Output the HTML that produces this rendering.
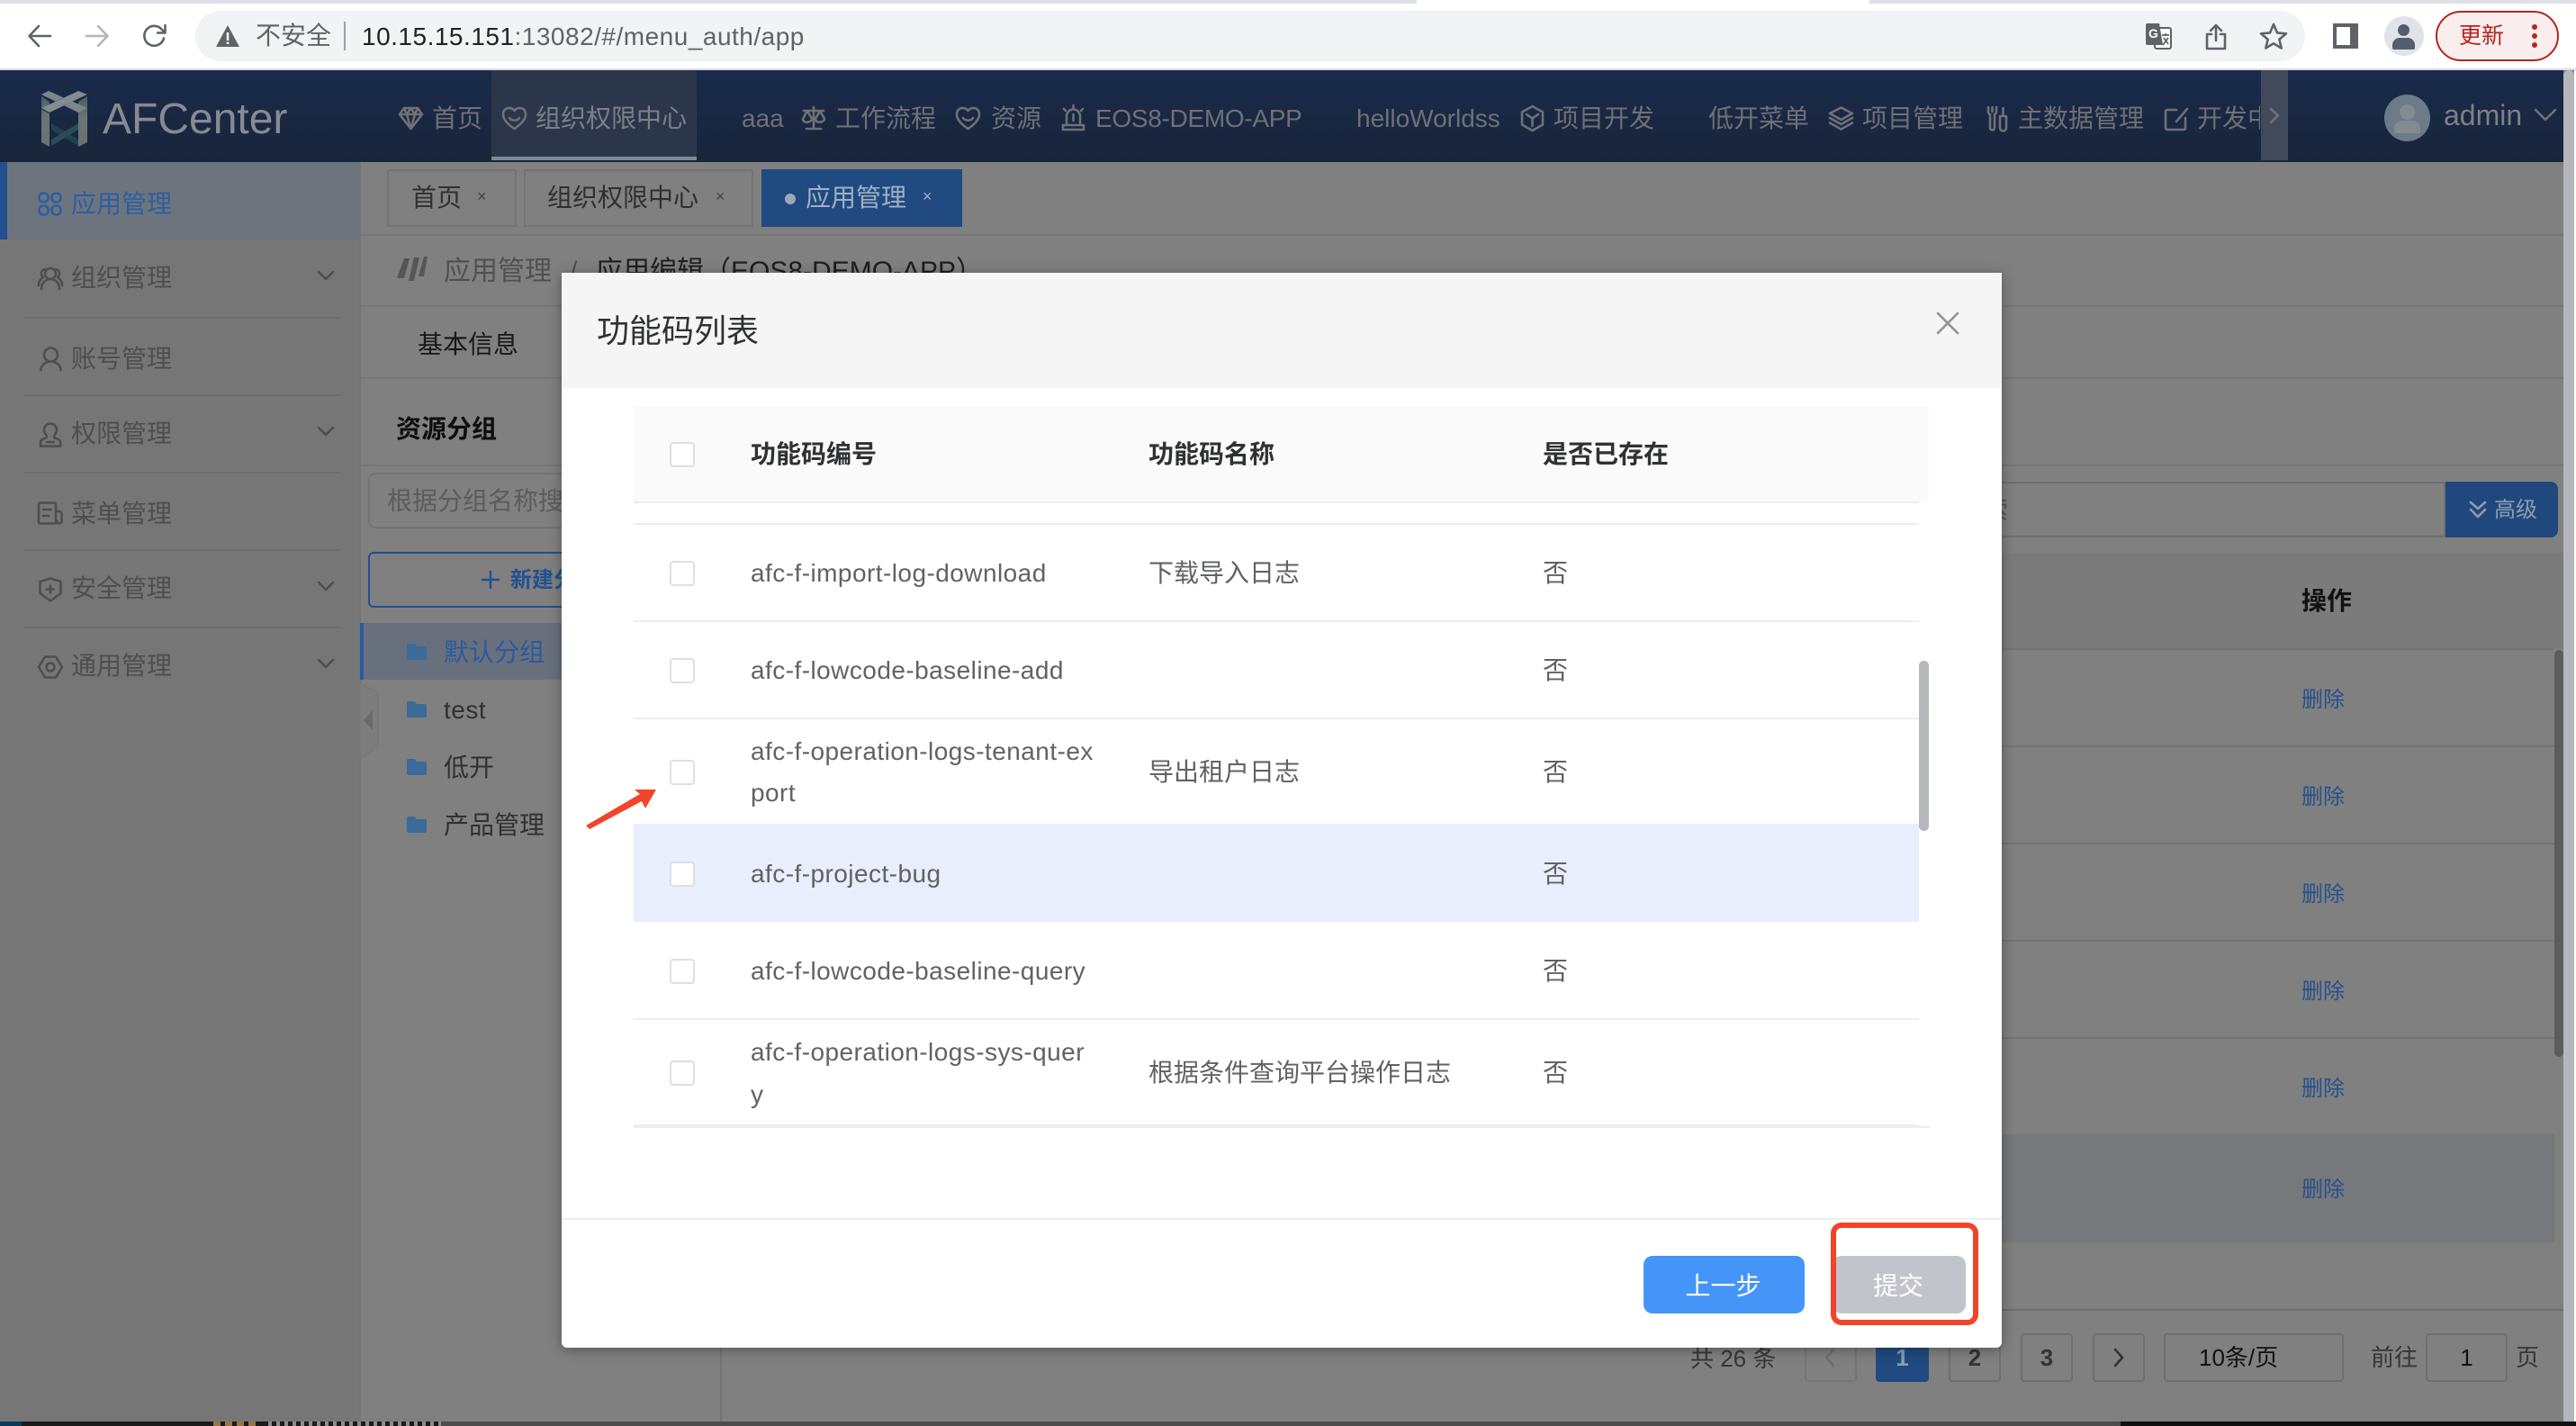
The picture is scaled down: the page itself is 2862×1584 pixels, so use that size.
<!DOCTYPE html>
<html lang="zh-CN">
<head>
<meta charset="utf-8">
<title>AFCenter</title>
<style>
*{box-sizing:border-box}
html,body{margin:0;padding:0}
body{width:2862px;height:1584px;overflow:hidden;position:relative;background:#808080;font-family:"Liberation Sans","Noto Sans CJK SC",sans-serif;font-size:28px}
.b{position:absolute}
.t{position:absolute;white-space:nowrap;height:50px;line-height:50px;margin-top:-24px;margin-left:-1px}
.lat{margin-left:0}
svg{position:absolute;overflow:visible}
.s{fill:none;stroke:currentColor;stroke-width:2.6;stroke-linecap:round;stroke-linejoin:round}
.nav{color:#6e7176}
.side{color:#4e4e4e}
.del{color:#28508c;font-size:24px;left:2558px}
.cell{color:#606266;letter-spacing:.45px;margin-left:0}
.zh{color:#606266}
.hd{color:#303133;font-weight:700}
.cb{position:absolute;left:744px;width:28px;height:28px;margin-top:-14px;background:#fff;border:2px solid #dcdfe6;border-radius:4px}
.ln{position:absolute;left:704px;width:1428px;height:2px;background:#ebeef5}
.pg{position:absolute;top:1481px;height:54px;border:2px solid #6f6f6f;border-radius:4px}
</style>
</head>
<body>

<!-- browser chrome -->
<div class="b" style="left:0;top:0;width:2862px;height:78px;background:#fff"></div>
<div class="b" style="left:0;top:0;width:1574px;height:4px;background:#dee1e6"></div>
<div class="b" style="left:2077px;top:0;width:785px;height:4px;background:#dee1e6"></div>
<div class="b" style="left:0;top:76px;width:2862px;height:2px;background:#dadce0"></div>
<svg style="left:30px;top:26px;color:#5f6368" width="28" height="28" viewBox="0 0 28 28"><path class="s" d="M26 14H3M13 3 2.500 14 13 25"/></svg>
<svg style="left:94px;top:26px;color:#b4b6ba" width="28" height="28" viewBox="0 0 28 28"><path class="s" d="M2 14h23M15 3l10.500 11L15 25"/></svg>
<svg style="left:158px;top:26px;color:#5f6368" width="28" height="28" viewBox="0 0 28 28"><path class="s" d="M24 16.500A11 11 0 1 1 22 7l3 3M25.500 2v8.500H17"/></svg>
<div class="b" style="left:217px;top:12px;width:2344px;height:56px;background:#f1f3f4;border-radius:28px"></div>
<svg style="left:239px;top:28px" width="28" height="24" viewBox="0 0 28 24"><path fill="#5f6368" d="M14 0 27 24H1z"/><path fill="#f1f3f4" d="M12.700 8h2.600v9h-2.600zM12.700 18.500h2.600V21h-2.600z"/></svg>
<div class="t" style="left:285px;top:39px;color:#5f6368;font-size:28px">不安全</div>
<div class="b" style="left:382px;top:24px;width:2px;height:32px;background:#9aa0a6"></div>
<div class="t lat" style="left:402px;top:40px;color:#5f6368;font-size:28px;letter-spacing:.5px"><span style="color:#202124">10.15.15.151</span>:13082/#/menu_auth/app</div>
<svg style="left:2384px;top:26px" width="30" height="30" viewBox="0 0 30 30"><rect x="10" y="5" width="18" height="23" rx="2" fill="#fff" stroke="#5f6368" stroke-width="2"/><path fill="#5f6368" d="M2 0h13l4 24H2a2 2 0 0 1-2-2V2a2 2 0 0 1 2-2z"/><text x="3" y="16" font-size="14" font-weight="700" fill="#fff" font-family="Liberation Sans">G</text><path d="M18 13h8M22 11v2M19 24l6-8M20 16l5 7" stroke="#5f6368" stroke-width="1.800" fill="none"/></svg>
<svg style="left:2450px;top:26px;color:#5f6368" width="24" height="30" viewBox="0 0 24 30"><path class="s" d="M12 19V2M6 8l6-6 6 6M7 12H2v16h20V12h-5"/></svg>
<svg style="left:2511px;top:25px;color:#5f6368" width="30" height="30" viewBox="0 0 30 30"><path class="s" d="M15 2l4 9.500 10 .8-7.600 6.500 2.300 9.700L15 23.300l-8.700 5.200 2.300-9.700L1 12.300l10-.8z"/></svg>
<div class="b" style="left:2592px;top:26px;width:28px;height:28px;background:#5f6368"></div>
<div class="b" style="left:2596px;top:30px;width:15px;height:20px;background:#fff"></div>
<div class="b" style="left:2649px;top:18px;width:44px;height:44px;border-radius:50%;background:#e0e3e7;overflow:hidden">
  <div class="b" style="left:15px;top:9px;width:13px;height:13px;border-radius:50%;background:#535f71"></div>
  <div class="b" style="left:9px;top:24px;width:25px;height:13px;border-radius:8px 8px 2px 2px;background:#535f71"></div>
</div>
<div class="b" style="left:2706px;top:12px;width:137px;height:56px;border-radius:28px;border:2px solid #b3261e;background:#f9eeed"></div>
<div class="t" style="left:2733px;top:39px;color:#b3261e;font-size:25px">更新</div>
<div class="b" style="left:2813px;top:27px;width:6px;height:6px;border-radius:50%;background:#b3261e"></div>
<div class="b" style="left:2813px;top:37px;width:6px;height:6px;border-radius:50%;background:#b3261e"></div>
<div class="b" style="left:2813px;top:47px;width:6px;height:6px;border-radius:50%;background:#b3261e"></div>

<!-- app header -->
<div class="b" style="left:0;top:78px;width:2848px;height:102px;background:linear-gradient(#192a4b,#19253a)"></div>
<svg style="left:46px;top:101px" width="51" height="62" viewBox="0 0 51 62">
  <defs>
    <linearGradient id="lc" x1="0" y1="0" x2="0" y2="1"><stop offset="0" stop-color="#46625f"/><stop offset=".45" stop-color="#6c7476"/><stop offset="1" stop-color="#697173"/></linearGradient>
  </defs>
  <path fill="#1f4250" d="M11 36l30 18v7L11 43z"/>
  <path fill="#2a4d5a" d="M41 36 11 54v7l30-18z"/>
  <path fill="url(#lc)" d="M0 6l9 6v50l-9-5z"/>
  <path fill="url(#lc)" d="M51 6l-10 6v50l10-5z"/>
  <path fill="#7d8689" d="M8 0 0 4 41 24 51 19z"/>
  <path fill="#19294a" d="M41.300 -1 51 3 9 25 -1 20z"/>
  <path fill="#838c8e" d="M41.300 0 50.700 4 9 24 0 19z"/>
</svg>
<div class="t lat" style="left:114px;top:132px;font-size:48px;color:#858b91">AFCenter</div>
<div class="b" style="left:546px;top:78px;width:228px;height:100px;background:#2b364a"></div>
<div class="b" style="left:546px;top:174px;width:228px;height:4px;background:#7f8992"></div>

<!-- nav icons -->
<svg class="nav" style="left:443px;top:118px" width="27" height="27" viewBox="0 0 27 27"><path class="s" d="M6 2h15l5 7-12.500 16L1 9zM1 9h25M9 9l4.500 16L18 9M6 2l3 7 4.500-7 4.500 7 3-7"/></svg>
<svg class="nav" style="left:558px;top:118px" width="27" height="27" viewBox="0 0 27 27"><path class="s" d="M13.500 5C10 0 1 1 1 9c0 7 8 13 12.500 16C18 22 26 16 26 9c0-8-9-9-12.500-4zM8 13c2 3.500 9 3.500 11 0"/></svg>
<svg class="nav" style="left:890px;top:118px" width="28" height="27" viewBox="0 0 28 27"><path class="s" d="M14 1v22M6 25h16M3 5h22M7 5 2 14c0 5 9 5 10 0L7 5zM21 5l-5 9c0 5 9 5 10 0L21 5z"/></svg>
<svg class="nav" style="left:1062px;top:118px" width="27" height="27" viewBox="0 0 27 27"><path class="s" d="M13.500 5C10 0 1 1 1 9c0 7 8 13 12.500 16C18 22 26 16 26 9c0-8-9-9-12.500-4zM8 13c2 3.500 9 3.500 11 0"/></svg>
<svg class="nav" style="left:1180px;top:116px" width="25" height="30" viewBox="0 0 25 30"><path class="s" d="M5 22V13a7.500 7.500 0 0 1 15 0v9M1 23h23v5H1zM12.500 1v2M2 5l2 2M23 5l-2 2M12.500 11v7"/></svg>
<svg class="nav" style="left:1689px;top:117px" width="27" height="29" viewBox="0 0 27 29"><path class="s" d="M13.500 1 25 7.500v14L13.500 28 2 21.500v-14zM7 10l6.500 4.500L20 10M13.500 14.500V23"/></svg>
<svg class="nav" style="left:2031px;top:118px" width="29" height="27" viewBox="0 0 29 27"><path class="s" stroke-width="3.400" d="M14.500 1.500 27 8l-12.500 7L2 8zM2 13l12.500 7L27 13M2 18.500l12.500 7 12.500-7"/></svg>
<svg class="nav" style="left:2206px;top:118px" width="25" height="27" viewBox="0 0 25 27"><path class="s" d="M3 1v5a3 3 0 0 0 2 3v15a2.500 2.500 0 0 0 5 0V9a3 3 0 0 0 2-3V1M7.500 1v5M16 11h7v13a3.500 3.500 0 0 1-7 0zM19.500 11V2"/></svg>
<svg class="nav" style="left:2405px;top:118px" width="27" height="27" viewBox="0 0 27 27"><path class="s" d="M13 4H3a2 2 0 0 0-2 2v18a2 2 0 0 0 2 2h18a2 2 0 0 0 2-2V13M25 3 13 17"/></svg>

<!-- nav text -->
<div class="t nav" style="left:481px;top:131px">首页</div>
<div class="t nav" style="left:596px;top:131px;color:#7c8086">组织权限中心</div>
<div class="t nav lat" style="left:824px;top:131px">aaa</div>
<div class="t nav" style="left:929px;top:131px">工作流程</div>
<div class="t nav" style="left:1102px;top:131px">资源</div>
<div class="t nav lat" style="left:1217px;top:131px;letter-spacing:-.3px">EOS8-DEMO-APP</div>
<div class="t nav lat" style="left:1507px;top:131px">helloWorldss</div>
<div class="t nav" style="left:1727px;top:131px">项目开发</div>
<div class="t nav" style="left:1899px;top:131px">低开菜单</div>
<div class="t nav" style="left:2070px;top:131px">项目管理</div>
<div class="t nav" style="left:2243px;top:131px">主数据管理</div>
<div class="t nav" style="left:2442px;top:131px;width:70px;overflow:hidden">开发中心</div>
<div class="b" style="left:2512px;top:78px;width:30px;height:100px;background:#414a5a"></div>
<svg class="nav" style="left:2522px;top:120px" width="10" height="17" viewBox="0 0 10 17"><path class="s" stroke-width="1.600" d="M1 1l8 7.500L1 16"/></svg>
<div class="b" style="left:2649px;top:105px;width:51px;height:52px;border-radius:50%;background:#6d7a88;overflow:hidden">
  <div class="b" style="left:17px;top:11px;width:17px;height:17px;border-radius:50%;background:#838a90"></div>
  <div class="b" style="left:11px;top:29px;width:29px;height:14px;border-radius:9px 9px 0 0;background:#838a90"></div>
</div>
<div class="t lat" style="left:2715px;top:127px;font-size:32px;color:#7d8185">admin</div>
<svg class="nav" style="left:2816px;top:121px" width="24" height="13" viewBox="0 0 24 13"><path class="s" stroke-width="2" d="M1 1l11 11L23 1"/></svg>

<!-- sidebar -->
<div class="b" style="left:0;top:180px;width:400px;height:1399px;background:#767676"></div>
<div class="b" style="left:0;top:180px;width:400px;height:86px;background:#6e747e"></div>
<div class="b" style="left:0;top:180px;width:8px;height:86px;background:#23508e"></div>
<div class="b" style="left:399px;top:180px;width:2px;height:1399px;background:#747474"></div>
<svg style="left:42px;top:213px;color:#2c5ea0" width="27" height="27" viewBox="0 0 27 27"><g class="s"><rect x="1.500" y="1.500" width="10" height="10" rx="4.500"/><rect x="15.500" y="1.500" width="10" height="10" rx="4.500"/><rect x="1.500" y="15.500" width="10" height="10" rx="4.500"/><rect x="15.500" y="15.500" width="10" height="10" rx="4.500"/></g></svg>
<div class="t" style="left:80px;top:226px;color:#2c5ea0">应用管理</div>
<svg class="side" style="left:42px;top:296px" width="28" height="26" viewBox="0 0 28 26"><path class="s" d="M14 2a6 6 0 0 1 0 12 6 6 0 0 1 0-12zM4 25c0-7 5-11 10-11s10 4 10 11M8 3a5 5 0 0 0-2 9c-3 2-5 5-5 9M20 3a5 5 0 0 1 2 9c3 2 5 5 5 9"/></svg>
<div class="t side" style="left:80px;top:308px">组织管理</div>
<svg class="side" style="left:353px;top:301px" width="18" height="11" viewBox="0 0 18 11"><path class="s" stroke-width="1.600" d="M1 1l8 8 8-8"/></svg>
<div class="b" style="left:26px;top:352px;width:352px;height:2px;background:#6d6d6d"></div>
<svg class="side" style="left:44px;top:385px" width="25" height="27" viewBox="0 0 25 27"><path class="s" d="M12.500 1.500a7.500 7.500 0 0 1 0 15 7.500 7.500 0 0 1 0-15zM1.500 26c0-5 5-9.500 11-9.500s11 4.500 11 9.500"/></svg>
<div class="t side" style="left:80px;top:398px">账号管理</div>
<div class="b" style="left:26px;top:438px;width:352px;height:2px;background:#6d6d6d"></div>
<svg class="side" style="left:43px;top:469px" width="26" height="28" viewBox="0 0 26 28"><path class="s" d="M13 1.500a7 7 0 0 1 7 7c0 4-3 5-3 8 0 2 7 1 7 6v4H2v-4c0-5 7-4 7-6 0-3-3-4-3-8a7 7 0 0 1 7-7zM9 22h8"/></svg>
<div class="t side" style="left:80px;top:481px">权限管理</div>
<svg class="side" style="left:353px;top:474px" width="18" height="11" viewBox="0 0 18 11"><path class="s" stroke-width="1.600" d="M1 1l8 8 8-8"/></svg>
<div class="b" style="left:26px;top:524px;width:352px;height:2px;background:#6d6d6d"></div>
<svg class="side" style="left:42px;top:557px" width="28" height="26" viewBox="0 0 28 26"><path class="s" d="M3 1.500h15a2 2 0 0 1 2 2v21H3a2 2 0 0 1-2-2v-19a2 2 0 0 1 2-2zM6 9h9M6 16h6M20 11h4a2.500 2.500 0 0 1 2.500 2.500V22a2.500 2.500 0 0 1-5 0"/></svg>
<div class="t side" style="left:80px;top:570px">菜单管理</div>
<div class="b" style="left:26px;top:610px;width:352px;height:2px;background:#6d6d6d"></div>
<svg class="side" style="left:43px;top:641px" width="26" height="28" viewBox="0 0 26 28"><path class="s" d="M13 1.500 24.500 5v13L13 26.500 1.500 18V5zM13 9.500v8M9 13.500h8"/></svg>
<div class="t side" style="left:80px;top:653px">安全管理</div>
<svg class="side" style="left:353px;top:646px" width="18" height="11" viewBox="0 0 18 11"><path class="s" stroke-width="1.600" d="M1 1l8 8 8-8"/></svg>
<div class="b" style="left:26px;top:696px;width:352px;height:2px;background:#6d6d6d"></div>
<svg class="side" style="left:42px;top:728px" width="28" height="26" viewBox="0 0 28 26"><path class="s" d="M8 1.500h12L27 13l-7 11.500H8L1 13z"/><circle class="s" cx="14" cy="13" r="4.500"/></svg>
<div class="t side" style="left:80px;top:739px">通用管理</div>
<svg class="side" style="left:353px;top:732px" width="18" height="11" viewBox="0 0 18 11"><path class="s" stroke-width="1.600" d="M1 1l8 8 8-8"/></svg>

<!-- tabs -->
<div class="b" style="left:401px;top:260px;width:2447px;height:2px;background:#777"></div>
<div class="b" style="left:430px;top:188px;width:144px;height:64px;border:2px solid #757575"></div>
<div class="t" style="left:458px;top:219px;color:#2f2f2f">首页</div>
<div class="t" style="left:531px;top:217px;color:#444;font-size:18px">×</div>
<div class="b" style="left:582px;top:188px;width:255px;height:64px;border:2px solid #757575"></div>
<div class="t" style="left:609px;top:219px;color:#2f2f2f">组织权限中心</div>
<div class="t" style="left:796px;top:217px;color:#444;font-size:18px">×</div>
<div class="b" style="left:846px;top:188px;width:223px;height:64px;background:#214a80"></div>
<div class="b" style="left:872px;top:215px;width:12px;height:12px;border-radius:50%;background:#9aa8ba"></div>
<div class="t" style="left:896px;top:219px;color:#9fb0c4">应用管理</div>
<div class="t" style="left:1026px;top:217px;color:#9fb0c4;font-size:18px">×</div>

<!-- breadcrumb -->
<svg style="left:440px;top:285px" width="35" height="27" viewBox="0 0 35 27"><path fill="#565656" d="M9 2h6L9 24H1zM20 1h6l-6 26h-6zM31 0h4l-4 22h-6z"/></svg>
<div class="t" style="left:494px;top:301px;font-size:30px;color:#505050">应用管理</div>
<div class="t" style="left:634px;top:301px;font-size:30px;color:#505050">/</div>
<div class="t" style="left:663px;top:301px;font-size:30px;color:#1e1e1e">应用编辑（EOS8-DEMO-APP）</div>
<div class="b" style="left:401px;top:339px;width:2447px;height:2px;background:#777"></div>

<!-- inner tabs -->
<div class="t" style="left:465px;top:382px;color:#171717">基本信息</div>
<div class="b" style="left:401px;top:419px;width:2447px;height:2px;background:#777"></div>
<div class="b" style="left:401px;top:516px;width:2447px;height:2px;background:#767676"></div>

<!-- group panel -->
<div class="t" style="left:441px;top:476px;color:#0e0e0e;font-weight:700">资源分组</div>
<div class="b" style="left:409px;top:525px;width:300px;height:62px;border:2px solid #737373;border-radius:8px"></div>
<div class="t" style="left:431px;top:556px;color:#5c5c5c">根据分组名称搜索</div>
<div class="b" style="left:409px;top:613px;width:300px;height:62px;border:2px solid #23508e;border-radius:6px"></div>
<svg style="left:535px;top:634px;color:#23508e" width="20" height="20" viewBox="0 0 20 20"><path class="s" stroke-width="1.700" d="M10 1v18M1 10h18"/></svg>
<div class="t" style="left:568px;top:644px;color:#23508e;font-size:24px;font-weight:700">新建分组</div>
<div class="b" style="left:400px;top:692px;width:300px;height:63px;background:#69707d"></div>
<div class="b" style="left:400px;top:692px;width:4px;height:63px;background:#2c5a9e"></div>
<svg style="left:452px;top:715px" width="22" height="18" viewBox="0 0 22 18"><path fill="#3a6b99" d="M2 0h7l2 3h9a2 2 0 0 1 2 2v11a2 2 0 0 1-2 2H2a2 2 0 0 1-2-2V2a2 2 0 0 1 2-2z"/></svg>
<div class="t" style="left:494px;top:724px;color:#2a5a9e">默认分组</div>
<svg style="left:452px;top:779px" width="22" height="18" viewBox="0 0 22 18"><path fill="#3a6b99" d="M2 0h7l2 3h9a2 2 0 0 1 2 2v11a2 2 0 0 1-2 2H2a2 2 0 0 1-2-2V2a2 2 0 0 1 2-2z"/></svg>
<div class="t" style="left:494px;top:788px;color:#303030;letter-spacing:.5px">test</div>
<svg style="left:452px;top:843px" width="22" height="18" viewBox="0 0 22 18"><path fill="#3a6b99" d="M2 0h7l2 3h9a2 2 0 0 1 2 2v11a2 2 0 0 1-2 2H2a2 2 0 0 1-2-2V2a2 2 0 0 1 2-2z"/></svg>
<div class="t" style="left:494px;top:852px;color:#303030">低开</div>
<svg style="left:452px;top:907px" width="22" height="18" viewBox="0 0 22 18"><path fill="#3a6b99" d="M2 0h7l2 3h9a2 2 0 0 1 2 2v11a2 2 0 0 1-2 2H2a2 2 0 0 1-2-2V2a2 2 0 0 1 2-2z"/></svg>
<div class="t" style="left:494px;top:916px;color:#303030">产品管理</div>
<svg style="left:400px;top:759px" width="20" height="84" viewBox="0 0 20 84"><path fill="#7d7d7d" stroke="#767676" d="M0 0l20 10v60L0 84z"/><path fill="#6a6a6a" d="M14 30v22L4 41z"/></svg>
<div class="b" style="left:800px;top:436px;width:2px;height:1143px;background:#747474"></div>

<!-- right table -->
<div class="b" style="left:2100px;top:535px;width:617px;height:62px;border:2px solid #6e6e6e"></div>
<div class="t" style="left:2204px;top:566px;color:#555;font-size:28px">索</div>
<div class="b" style="left:2717px;top:535px;width:125px;height:62px;background:#20487c;border-radius:0 8px 8px 0"></div>
<svg style="left:2744px;top:556px;color:#8c9db2" width="18" height="20" viewBox="0 0 18 20"><path class="s" stroke-width="1.600" d="M1 2l8 7 8-7M1 10l8 8 8-8"/></svg>
<div class="t" style="left:2772px;top:566px;color:#8c9db2;font-size:24px">高级</div>
<div class="b" style="left:2100px;top:614px;width:748px;height:106px;background:#7b7b7b"></div>
<div class="t" style="left:2558px;top:667px;color:#121212;font-weight:700">操作</div>
<div class="b" style="left:2100px;top:720px;width:738px;height:2px;background:#747474"></div>
<div class="b" style="left:2100px;top:828px;width:738px;height:2px;background:#747474"></div>
<div class="b" style="left:2100px;top:936px;width:738px;height:2px;background:#747474"></div>
<div class="b" style="left:2100px;top:1044px;width:738px;height:2px;background:#747474"></div>
<div class="b" style="left:2100px;top:1152px;width:738px;height:2px;background:#747474"></div>
<div class="b" style="left:2100px;top:1260px;width:738px;height:120px;background:#77787c"></div>
<div class="t del" style="top:777px">删除</div>
<div class="t del" style="top:885px">删除</div>
<div class="t del" style="top:993px">删除</div>
<div class="t del" style="top:1101px">删除</div>
<div class="t del" style="top:1209px">删除</div>
<div class="t del" style="top:1321px">删除</div>
<div class="b" style="left:2838px;top:722px;width:10px;height:452px;background:#5c5c5c;border-radius:5px"></div>
<div class="b" style="left:2100px;top:1454px;width:748px;height:2px;background:#6e6e6e"></div>

<!-- pagination -->
<div class="t" style="left:1879px;top:1508px;color:#363636;font-size:26px">共 26 条</div>
<div class="pg" style="left:2005px;width:58px;border-color:#767676"></div>
<svg style="left:2027px;top:1498px;color:#6e6e6e" width="12" height="20" viewBox="0 0 12 20"><path class="s" stroke-width="2" d="M10 1 2 10l8 9"/></svg>
<div class="pg" style="left:2084px;width:59px;background:#204a80;border:0"></div>
<div class="t lat" style="left:2084px;width:59px;text-align:center;top:1507px;color:#8a9db5;font-size:26px;font-weight:700">1</div>
<div class="pg" style="left:2165px;width:58px"></div>
<div class="t lat" style="left:2165px;width:58px;text-align:center;top:1507px;color:#333;font-size:26px;font-weight:700">2</div>
<div class="pg" style="left:2245px;width:58px"></div>
<div class="t lat" style="left:2245px;width:58px;text-align:center;top:1507px;color:#333;font-size:26px;font-weight:700">3</div>
<div class="pg" style="left:2325px;width:58px"></div>
<svg style="left:2348px;top:1498px;color:#333" width="12" height="20" viewBox="0 0 12 20"><path class="s" stroke-width="2" d="M2 1l8 9-8 9"/></svg>
<div class="pg" style="left:2404px;width:200px"></div>
<div class="t lat" style="left:2443px;top:1507px;color:#111;font-size:26px">10条/页</div>
<div class="t" style="left:2635px;top:1507px;color:#363636;font-size:26px">前往</div>
<div class="pg" style="left:2695px;width:91px"></div>
<div class="t lat" style="left:2695px;width:91px;text-align:center;top:1507px;color:#111;font-size:26px">1</div>
<div class="t" style="left:2796px;top:1507px;color:#363636;font-size:26px">页</div>

<!-- page scrollbar & bottom strip -->
<div class="b" style="left:2848px;top:78px;width:12px;height:1501px;background:#b5b6bb;border-radius:6px 6px 0 0"></div>
<div class="b" style="left:2860px;top:78px;width:2px;height:1506px;background:#fff"></div>
<div class="b" style="left:0;top:1579px;width:2862px;height:5px;background:#111"></div>
<div class="b" style="left:0;top:1579px;width:24px;height:5px;background:#0a3a5a"></div>
<div class="b" style="left:24px;top:1579px;width:466px;height:5px;background:#1b1b1b"></div>
<div class="b" style="left:237px;top:1579px;width:48px;height:5px;background:repeating-linear-gradient(90deg,#9a7446 0 8px,#1b1b1b 8px 13px)"></div>
<div class="b" style="left:298px;top:1579px;width:192px;height:5px;background:repeating-linear-gradient(90deg,#8c8c8c 0 4px,#1b1b1b 4px 9px)"></div>
<div class="b" style="left:490px;top:1579px;width:1866px;height:5px;background:#4d4d4d"></div>

<!-- modal -->
<div class="b" style="left:624px;top:303px;width:1600px;height:1194px;background:#fff;border-radius:0 0 6px 6px;box-shadow:0 2px 14px rgba(0,0,0,.35)"></div>
<div class="b" style="left:624px;top:303px;width:1600px;height:128px;background:#f5f5f5"></div>
<div class="t" style="left:664px;top:367px;font-size:36px;color:#303133">功能码列表</div>
<svg style="left:2152px;top:347px;color:#909399" width="24" height="24" viewBox="0 0 24 24"><path class="s" stroke-width="2.400" stroke-linecap="butt" d="M1 1l22 22M23 1 1 23"/></svg>

<div class="b" style="left:704px;top:451px;width:1439px;height:107px;background:#fafafa"></div>
<div class="ln" style="top:557px"></div>
<div class="ln" style="top:581px"></div>
<div class="ln" style="top:689px"></div>
<div class="ln" style="top:797px"></div>
<div class="b" style="left:704px;top:915px;width:1428px;height:109px;background:#e8eefc"></div>
<div class="ln" style="top:1131px"></div>
<div class="b" style="left:704px;top:1249px;width:1428px;height:4px;background:#ebeef5"></div>
<div class="b" style="left:2132px;top:1251px;width:12px;height:2px;background:#ebeef5"></div>
<div class="b" style="left:2132px;top:734px;width:11px;height:189px;background:#b7b8bc;border-radius:5px"></div>

<div class="cb" style="top:505px"></div>
<div class="t hd" style="left:834px;top:504px;margin-left:0">功能码编号</div>
<div class="t hd" style="left:1277px;top:504px">功能码名称</div>
<div class="t hd" style="left:1715px;top:504px">是否已存在</div>

<div class="cb" style="top:637px"></div>
<div class="t cell" style="left:834px;top:636px">afc-f-import-log-download</div>
<div class="t zh" style="left:1277px;top:636px">下载导入日志</div>
<div class="t zh" style="left:1715px;top:636px">否</div>

<div class="cb" style="top:745px"></div>
<div class="t cell" style="left:834px;top:744px">afc-f-lowcode-baseline-add</div>
<div class="t zh" style="left:1715px;top:744px">否</div>

<div class="cb" style="top:858px"></div>
<div class="t cell" style="left:834px;top:834px">afc-f-operation-logs-tenant-ex</div>
<div class="t cell" style="left:834px;top:880px">port</div>
<div class="t zh" style="left:1277px;top:857px">导出租户日志</div>
<div class="t zh" style="left:1715px;top:857px">否</div>

<div class="cb" style="top:971px"></div>
<div class="t cell" style="left:834px;top:970px">afc-f-project-bug</div>
<div class="t zh" style="left:1715px;top:970px">否</div>

<div class="cb" style="top:1079px"></div>
<div class="t cell" style="left:834px;top:1078px">afc-f-lowcode-baseline-query</div>
<div class="t zh" style="left:1715px;top:1078px">否</div>

<div class="cb" style="top:1192px"></div>
<div class="t cell" style="left:834px;top:1168px">afc-f-operation-logs-sys-quer</div>
<div class="t cell" style="left:834px;top:1215px">y</div>
<div class="t zh" style="left:1277px;top:1191px">根据条件查询平台操作日志</div>
<div class="t zh" style="left:1715px;top:1191px">否</div>

<div class="b" style="left:624px;top:1353px;width:1600px;height:2px;background:#ebeef5"></div>
<div class="b" style="left:1826px;top:1395px;width:179px;height:64px;background:#4595f8;border-radius:10px"></div>
<div class="t" style="left:1826px;width:179px;top:1428px;text-align:center;color:#fff">上一步</div>
<div class="b" style="left:2036px;top:1395px;width:148px;height:64px;background:#c2c4cb;border-radius:10px"></div>
<div class="t" style="left:2036px;width:148px;top:1428px;text-align:center;color:#fff">提交</div>

<!-- annotations -->
<div class="b" style="left:2034px;top:1358px;width:164px;height:114px;border:6px solid #f1442a;border-radius:12px"></div>
<svg style="left:0;top:0" width="2862" height="1584" viewBox="0 0 2862 1584"><path fill="#f1442a" d="M651 917 711 882 705 877 729 877 717 898 713 890 655 921z"/></svg>

</body>
</html>
